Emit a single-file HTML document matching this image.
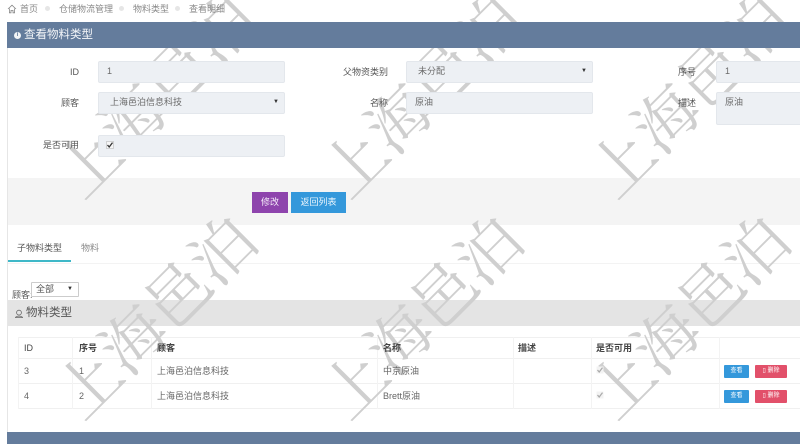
<!DOCTYPE html>
<html lang="zh">
<head>
<meta charset="utf-8">
<style>
html,body{margin:0;padding:0;width:800px;height:444px;overflow:hidden;background:#fff;}
body{font-family:"Liberation Sans","Noto Sans CJK SC",sans-serif;font-size:9px;color:#666;position:relative;}
.a{position:absolute;white-space:nowrap;}
.top{z-index:3;}
.f{position:absolute;z-index:3;background:#edf0f4;border:1px solid #e3e7ec;box-sizing:border-box;height:22px;border-radius:2px;line-height:19px;color:#6a6a6a;font-size:9px;}
.l{position:absolute;z-index:3;white-space:nowrap;text-align:right;font-size:9px;color:#555;line-height:12px;}
.arr{position:absolute;right:5px;top:0;font-size:6px;color:#333;}
.v{position:absolute;background:#f3f3f3;}
.h{position:absolute;background:#f0f0f0;}
.th{position:absolute;z-index:3;font-size:9px;color:#444;font-weight:bold;line-height:12px;white-space:nowrap;}
.td{position:absolute;z-index:3;font-size:9px;color:#666;line-height:12px;white-space:nowrap;}
.b{position:absolute;z-index:3;color:#fff;font-size:6px;text-align:center;line-height:13px;height:13px;border-radius:1px;}
</style>
</head>
<body>
<!-- breadcrumb -->
<svg class="a top" style="left:7px;top:4px" width="10" height="10" viewBox="0 0 10 10"><path d="M1 5 L5 1.2 L9 5 M2.4 4.5 V8.8 H4 V6.4 H6 V8.8 H7.6 V4.5" fill="none" stroke="#888" stroke-width="0.8"/></svg>
<div class="a top" style="left:20px;top:2px;font-size:9px;line-height:14px;color:#888">首页</div>
<div class="a top" style="left:45px;top:6px;width:5px;height:5px;border-radius:50%;background:#e6e6e6"></div>
<div class="a top" style="left:59px;top:2px;font-size:9px;line-height:14px;color:#888">仓储物流管理</div>
<div class="a top" style="left:119px;top:6px;width:5px;height:5px;border-radius:50%;background:#e6e6e6"></div>
<div class="a top" style="left:133px;top:2px;font-size:9px;line-height:14px;color:#888">物料类型</div>
<div class="a top" style="left:175px;top:6px;width:5px;height:5px;border-radius:50%;background:#e6e6e6"></div>
<div class="a top" style="left:189px;top:2px;font-size:9px;line-height:14px;color:#888">查看明细</div>

<!-- outer left border -->
<div class="a" style="left:7px;top:22px;width:1px;height:410px;background:#e6e6e6"></div>

<!-- header -->
<div class="a top" style="left:7px;top:22px;width:793px;height:26px;background:#647c9c"></div>
<div class="a top" style="left:14px;top:32px;width:7px;height:7px;border-radius:50%;background:#f2f4f7;color:#647c9c;font-size:6px;line-height:7px;text-align:center;font-weight:bold">i</div>
<div class="a top" style="left:24px;top:26px;font-size:11.5px;line-height:18px;color:#f4f6f9">查看物料类型</div>

<!-- form -->
<div class="l" style="left:40px;width:39px;top:66px">ID</div>
<div class="f" style="left:98px;top:61px;width:187px;padding-left:8px">1</div>
<div class="l" style="left:320px;width:68px;top:66px">父物资类别</div>
<div class="f" style="left:406px;top:61px;width:187px;padding-left:11px">未分配<span class="arr">▼</span></div>
<div class="l" style="left:660px;width:36px;top:66px">序号</div>
<div class="f" style="left:716px;top:61px;width:90px;padding-left:8px">1</div>

<div class="l" style="left:40px;width:39px;top:97px">顾客</div>
<div class="f" style="left:98px;top:92px;width:187px;padding-left:11px">上海邑泊信息科技<span class="arr">▼</span></div>
<div class="l" style="left:340px;width:48px;top:97px">名称</div>
<div class="f" style="left:406px;top:92px;width:187px;padding-left:8px">原油</div>
<div class="l" style="left:660px;width:36px;top:97px">描述</div>
<div class="f" style="left:716px;top:92px;width:90px;height:33px;padding-left:8px;line-height:18px">原油</div>

<div class="l" style="left:30px;width:49px;top:139px">是否可用</div>
<div class="f" style="left:98px;top:135px;width:187px"></div>
<svg class="a top" style="left:105px;top:140px" width="10" height="10" viewBox="0 0 10 10"><rect x="1.5" y="1.5" width="7" height="7" fill="#f6f6f6" stroke="#bbb" stroke-width="0.6"/><path d="M2.5 5 L4.2 7 L7.5 2.6" fill="none" stroke="#333" stroke-width="1.3"/></svg>

<!-- action band -->
<div class="a" style="left:8px;top:178px;width:792px;height:47px;background:#f4f4f4"></div>
<div class="a top" style="left:252px;top:192px;width:36px;height:21px;background:#8e44ad;color:#f6eefa;font-size:9px;line-height:21px;text-align:center">修改</div>
<div class="a top" style="left:291px;top:192px;width:55px;height:21px;background:#3498db;color:#eef7fd;font-size:9px;line-height:21px;text-align:center">返回列表</div>

<!-- tabs -->
<div class="a top" style="left:17px;top:241px;font-size:9px;line-height:14px;color:#555">子物料类型</div>
<div class="a top" style="left:81px;top:241px;font-size:9px;line-height:14px;color:#888">物料</div>
<div class="a" style="left:8px;top:263px;width:792px;height:1px;background:#f3f3f3"></div>
<div class="a" style="left:8px;top:260px;width:63px;height:2px;background:#3fb8c8"></div>

<!-- filter -->
<div class="a top" style="left:12px;top:289px;font-size:9px;line-height:12px;color:#555">顾客:</div>
<div class="a top" style="left:31px;top:282px;width:48px;height:15px;background:#fff;border:1px solid #ccc;box-sizing:border-box;font-size:9px;line-height:12px;padding-left:4px;color:#555;border-radius:1px">全部<span style="position:absolute;right:5px;top:0;font-size:6px;color:#333">▼</span></div>

<!-- section title -->
<div class="a" style="left:8px;top:300px;width:792px;height:26px;background:#e4e4e4"></div>
<svg class="a top" style="left:14px;top:309px" width="10" height="10" viewBox="0 0 10 10"><circle cx="5" cy="3.6" r="2.4" fill="none" stroke="#666" stroke-width="0.8"/><path d="M1.5 8.6 C2 6.6 8 6.6 8.5 8.6 Z" fill="none" stroke="#666" stroke-width="0.8"/></svg>
<div class="a top" style="left:26px;top:305px;font-size:11.5px;line-height:16px;color:#555">物料类型</div>

<!-- table -->
<div class="h" style="left:18px;top:337px;width:782px;height:1px"></div>
<div class="h" style="left:18px;top:358px;width:782px;height:1px"></div>
<div class="h" style="left:18px;top:383px;width:782px;height:1px"></div>
<div class="h" style="left:18px;top:408px;width:782px;height:1px"></div>
<div class="v" style="left:18px;top:337px;width:1px;height:72px"></div>
<div class="v" style="left:72px;top:337px;width:1px;height:72px"></div>
<div class="v" style="left:151px;top:337px;width:1px;height:72px"></div>
<div class="v" style="left:377px;top:337px;width:1px;height:72px"></div>
<div class="v" style="left:513px;top:337px;width:1px;height:72px"></div>
<div class="v" style="left:591px;top:337px;width:1px;height:72px"></div>
<div class="v" style="left:719px;top:337px;width:1px;height:72px"></div>

<div class="th" style="left:24px;top:342px;font-weight:normal">ID</div>
<div class="th" style="left:79px;top:342px">序号</div>
<div class="th" style="left:157px;top:342px">顾客</div>
<div class="th" style="left:383px;top:342px">名称</div>
<div class="th" style="left:518px;top:342px">描述</div>
<div class="th" style="left:596px;top:342px">是否可用</div>

<div class="td" style="left:24px;top:365px">3</div>
<div class="td" style="left:79px;top:365px">1</div>
<div class="td" style="left:157px;top:365px">上海邑泊信息科技</div>
<div class="td" style="left:383px;top:365px">中京原油</div>
<svg class="a top" style="left:595px;top:365px" width="10" height="10" viewBox="0 0 10 10"><rect x="1.5" y="1.5" width="7" height="7" fill="#f3f3f3"/><path d="M2.5 5 L4.2 7 L7.5 2.6" fill="none" stroke="#aaa" stroke-width="1.2"/></svg>
<div class="b" style="left:724px;top:365px;width:25px;background:#3498db">查看</div>
<div class="b" style="left:755px;top:365px;width:32px;background:#e2506a">▯ 删除</div>

<div class="td" style="left:24px;top:390px">4</div>
<div class="td" style="left:79px;top:390px">2</div>
<div class="td" style="left:157px;top:390px">上海邑泊信息科技</div>
<div class="td" style="left:383px;top:390px">Brett原油</div>
<svg class="a top" style="left:595px;top:390px" width="10" height="10" viewBox="0 0 10 10"><rect x="1.5" y="1.5" width="7" height="7" fill="#f3f3f3"/><path d="M2.5 5 L4.2 7 L7.5 2.6" fill="none" stroke="#aaa" stroke-width="1.2"/></svg>
<div class="b" style="left:724px;top:390px;width:25px;background:#3498db">查看</div>
<div class="b" style="left:755px;top:390px;width:32px;background:#e2506a">▯ 删除</div>

<!-- footer bar -->
<div class="a top" style="left:7px;top:432px;width:793px;height:12px;background:#647c9c"></div>

<!-- watermark -->
<svg class="a" style="left:0;top:0;width:800px;height:444px;overflow:hidden;z-index:2;pointer-events:none" width="800" height="444" viewBox="0 0 800 444">
<g font-family="'Noto Serif CJK SC','WenQuanYi Zen Hei',serif" font-size="63" fill="#cfcfcf">
<text transform="translate(87,197) rotate(-45)" x="-6" y="0">上海邑泊</text>
<text transform="translate(353,197) rotate(-45)" x="-6" y="0">上海邑泊</text>
<text transform="translate(620,197) rotate(-45)" x="-6" y="0">上海邑泊</text>
<text transform="translate(87,418) rotate(-45)" x="-6" y="0">上海邑泊</text>
<text transform="translate(353,418) rotate(-45)" x="-6" y="0">上海邑泊</text>
<text transform="translate(620,418) rotate(-45)" x="-6" y="0">上海邑泊</text>
</g>
</svg>
</body>
</html>
